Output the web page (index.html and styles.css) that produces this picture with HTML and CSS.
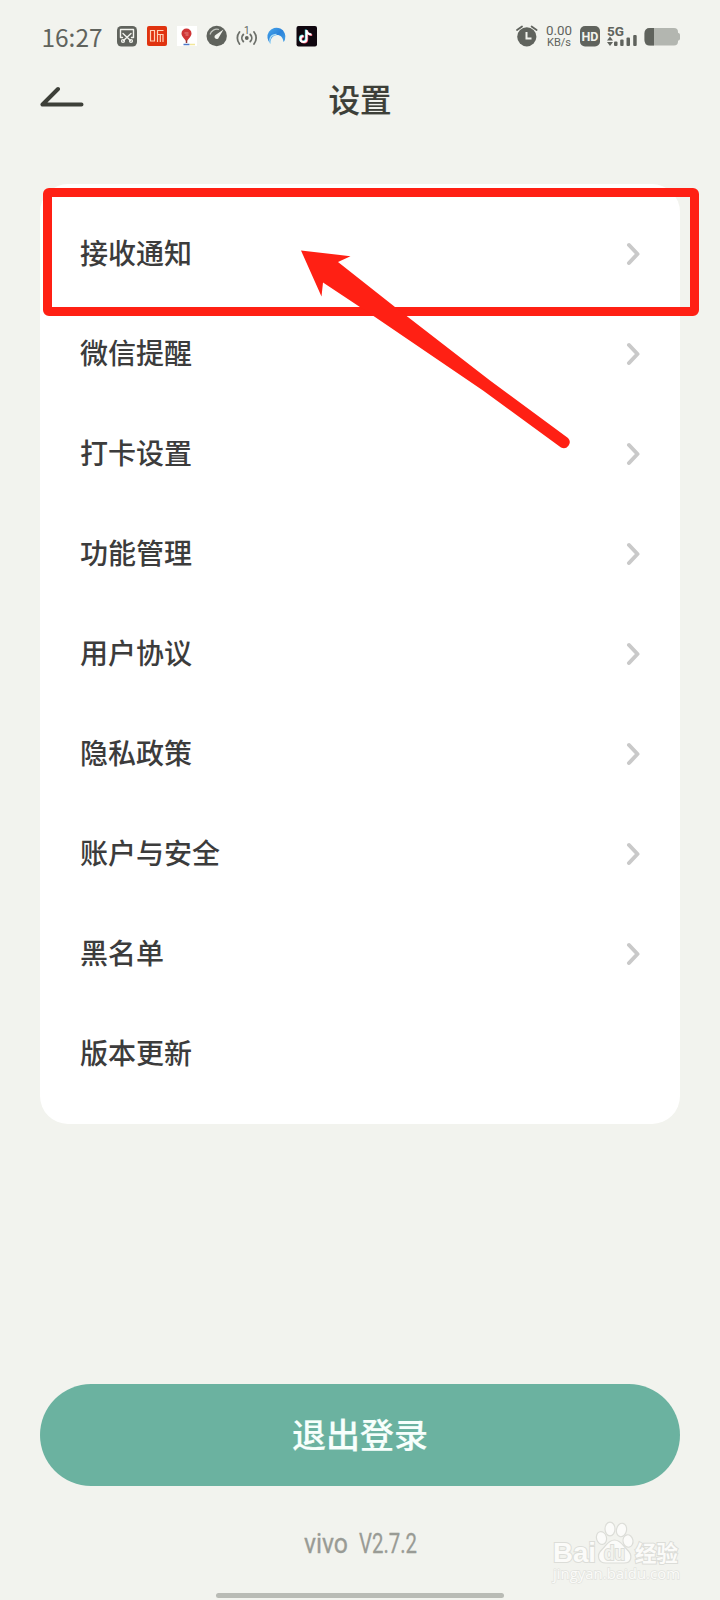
FILE: index.html
```html
<!DOCTYPE html>
<html lang="zh-CN">
<head>
<meta charset="utf-8">
<title>设置</title>
<link rel="stylesheet" href="styles.css">
</head>
<body>
<div class="screen">
  <header class="status">
    <svg class="status-art" viewBox="0 0 720 72" width="720" height="72">
      <text class="clock" x="41.5" y="46.5" textLength="61" lengthAdjust="spacingAndGlyphs">16:27</text>
      <g fill="none" stroke-linecap="round" stroke-linejoin="round">
        <rect x="117" y="26" width="20" height="20.500" rx="4.500" fill="#60635d"/>
        <path d="M122.500 37.500H120.500V29.500H133.500V37.500H131.500M123 33.500L131 41M131 33.500L123 41" stroke="#f2f3ee" stroke-width="1.400"/>
        <circle cx="123" cy="41" r="1.500" stroke="#f2f3ee" stroke-width="1.200"/>
        <circle cx="131" cy="41" r="1.500" stroke="#f2f3ee" stroke-width="1.200"/>
      </g>
      <rect x="147" y="26" width="20" height="20" rx="2" fill="#e0330f"/>
      <path d="M150.500 30.500H154.500V41H150.500ZM163.500 30.500H157.500V42M157.500 34.500H163V42M160.300 34.500V42" fill="none" stroke="#ffd3b8" stroke-width="1.200"/>
      <rect x="177" y="26" width="20" height="20" fill="#fff"/>
      <path d="M186.500 28.500a5 5 0 0 1 5 5c0 3-3 5-5 8c-2-3-5-5-5-8a5 5 0 0 1 5-5z" fill="#cf3435"/>
      <path d="M184.500 33h4M185.500 35h3" stroke="#efa09b" stroke-width=".8"/>
      <path d="M186.500 40v3" stroke="#983634" stroke-width="1.500"/>
      <path d="M183.500 44.500h6" stroke="#4d79c7" stroke-width="1.500"/><path d="M190 44.500h5" stroke="#f2e79a" stroke-width="1.500"/>
      <circle cx="216.700" cy="36" r="10.200" fill="#60635d"/>
      <path d="M210 34.500a7.200 7.200 0 0 1 9-5" fill="none" stroke="#c3c6c0" stroke-width="1.200"/>
      <path d="M223.500 29.500L218.800 37.500A2.200 2.200 0 1 1 215.500 35Z" fill="#f2f3ee"/>
      <g fill="none" stroke="#6c6f69" stroke-width="1.800" stroke-linecap="round">
        <path d="M239.500 32a9.500 9.500 0 0 0 0 12M243.300 34.500a5 5 0 0 0 0 7M254 32a9.500 9.500 0 0 1 0 12M250.300 34.500a5 5 0 0 1 0 7"/>
      </g>
      <circle cx="246.800" cy="38" r="1.900" fill="#60635d"/>
      <text class="tiny" x="244" y="34">1</text>
      <defs><linearGradient id="swirl" x1="0" x2="1" y1="0" y2="1"><stop offset="0" stop-color="#4ba9ec"/><stop offset=".5" stop-color="#2b83da"/><stop offset="1" stop-color="#4ba5e9"/></linearGradient></defs>
      <path d="M270.500 43.500A9 9 0 1 1 285 39.500Q284.500 41 283.500 42C283 37.500 280.500 35 277 35C273 35.500 270 38.500 270.500 43.500Z" fill="url(#swirl)"/>
      <path d="M270.500 43.500C268.500 38 271.500 34.500 276.500 34.500" fill="none" stroke="#a8dbf5" stroke-width="1.300"/>
      <rect x="296.500" y="26" width="20.500" height="20.500" rx="2" fill="#10070f"/>
      <g fill="none" stroke-width="2">
        <path d="M306.500 30V39a3 3 0 1 1-3-3M306.500 30.500q1 4 5 4" stroke="#4bd5dd" transform="translate(-.7 -.5)"/>
        <path d="M306.500 30V39a3 3 0 1 1-3-3M306.500 30.500q1 4 5 4" stroke="#f14868" transform="translate(.7 .6)"/>
        <path d="M306.500 30V39a3 3 0 1 1-3-3M306.500 30.500q1 4 5 4" stroke="#fff"/>
      </g>
      <circle cx="526.800" cy="36.800" r="9.600" fill="#60635d"/>
      <path d="M517 30l5-3.500M536.600 30l-5-3.500" stroke="#60635d" stroke-width="1.800" stroke-linecap="round"/>
      <path d="M526.500 32v6.500h5" fill="none" stroke="#f2f3ee" stroke-width="2"/>
      <text class="rate" x="546" y="35" textLength="26" lengthAdjust="spacingAndGlyphs">0.00</text>
      <text class="unit" x="547" y="46" textLength="24" lengthAdjust="spacingAndGlyphs">KB/s</text>
      <rect x="580" y="26" width="20" height="20.500" rx="5" fill="#60635d"/>
      <text class="hd" x="581.500" y="41" textLength="17" lengthAdjust="spacingAndGlyphs">HD</text>
      <text class="net" x="607" y="36" textLength="17" lengthAdjust="spacingAndGlyphs">5G</text>
      <path d="M607 40.500l3-4 3 4zM607 42l3 4 3-4z" fill="#60635d"/>
      <g fill="#60635d"><rect x="614" y="41.500" width="3.500" height="4.500" rx="1"/><rect x="620.200" y="39.500" width="3.400" height="6.500" rx="1"/><rect x="626.500" y="37.500" width="3.500" height="8.500" rx="1"/><rect x="633.200" y="35" width="3.500" height="11" rx="1"/></g>
      <path d="M650 28h24q4 0 4 4v.8q2 .5 2 2v4q0 1.500-2 2v.8q0 4-4 4h-24q-5.500 0-5.500-5.500v-6.600q0-5.500 5.500-5.500z" fill="#b3b6b0"/>
      <path d="M654 28v17.600h-4q-5.500 0-5.500-5.500v-6.600q0-5.500 5.500-5.500z" fill="#60635d"/>
    </svg>
  </header>
  <nav class="nav">
    <svg class="back" viewBox="0 0 44 22" width="44" height="22"><path d="M18 3L2.500 18.500H41.500" fill="none" stroke="#3d3f38" stroke-width="4" stroke-linecap="round" stroke-linejoin="round"/></svg>
    <h1 class="title">设置</h1>
  </nav>
  <main class="card">
    <div class="row"><span>接收通知</span><svg class="chev" viewBox="0 0 14 24"><path d="M3 3L11.500 12L3 21"/></svg></div>
    <div class="row"><span>微信提醒</span><svg class="chev" viewBox="0 0 14 24"><path d="M3 3L11.500 12L3 21"/></svg></div>
    <div class="row"><span>打卡设置</span><svg class="chev" viewBox="0 0 14 24"><path d="M3 3L11.500 12L3 21"/></svg></div>
    <div class="row"><span>功能管理</span><svg class="chev" viewBox="0 0 14 24"><path d="M3 3L11.500 12L3 21"/></svg></div>
    <div class="row"><span>用户协议</span><svg class="chev" viewBox="0 0 14 24"><path d="M3 3L11.500 12L3 21"/></svg></div>
    <div class="row"><span>隐私政策</span><svg class="chev" viewBox="0 0 14 24"><path d="M3 3L11.500 12L3 21"/></svg></div>
    <div class="row"><span>账户与安全</span><svg class="chev" viewBox="0 0 14 24"><path d="M3 3L11.500 12L3 21"/></svg></div>
    <div class="row"><span>黑名单</span><svg class="chev" viewBox="0 0 14 24"><path d="M3 3L11.500 12L3 21"/></svg></div>
    <div class="row"><span>版本更新</span></div>
  </main>
  <button class="logout">退出登录</button>
  <footer class="version">
    <svg viewBox="0 0 130 40" width="130" height="40"><text class="ver" x="9" y="28" textLength="44" lengthAdjust="spacingAndGlyphs">vivo</text><text class="ver" x="64" y="28" textLength="58" lengthAdjust="spacingAndGlyphs">V2.7.2</text></svg>
  </footer>
  <div class="home"></div>

  <div class="highlight"></div>
  <svg class="arrow" viewBox="295 245 280 210" width="280" height="210">
    <path d="M301 250.500L350.500 256.200L338 262L395 307L490 380.500L568 438A6 6 0 0 1 561 447.500L483 390.500L375 317L323 282.500L321.500 296.500Z" fill="#ff2014"/>
  </svg>
  <svg class="watermark" viewBox="545 1515 145 75" width="145" height="75">
    <g class="mark">
      <text class="bai" x="553" y="1562" textLength="43" lengthAdjust="spacingAndGlyphs">Bai</text>
      <ellipse cx="601.500" cy="1538" rx="5" ry="6.500" transform="rotate(-15 601.500 1538)"/>
      <ellipse cx="610" cy="1529" rx="5" ry="6.800"/>
      <ellipse cx="621.500" cy="1530" rx="5" ry="6.800" transform="rotate(12 621.500 1530)"/>
      <ellipse cx="628" cy="1541" rx="5" ry="6.300" transform="rotate(-10 628 1541)"/>
      <path d="M614.500 1540C608 1540 606 1546 602 1549.500C596 1555 598 1563 606 1563H624C632 1563 633 1555 627 1549.500C623 1546 621 1540 614.500 1540Z"/>
      <text class="du" x="604" y="1560" textLength="21" lengthAdjust="spacingAndGlyphs">du</text>
      <text class="jy" x="635" y="1561" textLength="43" lengthAdjust="spacingAndGlyphs">经验</text>
      <text class="url" x="553" y="1579" textLength="127" lengthAdjust="spacingAndGlyphs">jingyan.baidu.com</text>
    </g>
  </svg>
</div>
</body>
</html>
```
FILE: styles.css
```css
* { box-sizing: border-box; }
body {
  margin: 0;
  background: #f2f3ee;
  font-family: "Noto Sans CJK SC", sans-serif;
}
.screen {
  position: relative;
  width: 720px;
  height: 1600px;
  overflow: hidden;
  display: flex;
  flex-direction: column;
  background: #f2f3ee;
}
.status { height: 72px; flex: none; }
.status-art { display: block; }
.status-art text { fill: #60635d; font-family: Roboto, sans-serif; }
.status-art .clock { font-family: "Noto Sans CJK SC", sans-serif; font-size: 24.5px; }
.status-art .tiny { font-size: 10px; }
.status-art .rate { font-size: 13px; }
.status-art .unit { font-size: 10.5px; }
.status-art .hd { font-size: 13.5px; font-weight: 700; fill: #f2f3ee; }
.status-art .net { font-size: 13.5px; font-weight: 700; }
.nav {
  display: grid;
  grid-template-columns: 1fr auto 1fr;
  align-items: center;
  height: 56px;
  padding: 0 39.5px;
  flex: none;
}
.back { margin-top: -6px; }
.title {
  margin: 0;
  padding-bottom: 3px;
  font-size: 31.5px;
  line-height: 53px;
  font-weight: 500;
  color: #3d3f38;
  -webkit-text-stroke: .2px #3d3f38;
}
.card {
  flex: none;
  margin: 56px 40px 0;
  padding: 20px 40px;
  border-radius: 28px;
  background: #fff;
}
.row {
  display: flex;
  align-items: center;
  justify-content: space-between;
  height: 100px;
  font-size: 28px;
  line-height: 40px;
  font-weight: 500;
  color: #3c3c3c;
}
.row span { padding-bottom: 5px; }
.chev { width: 14px; height: 24px; margin-bottom: 1px; }
.chev path { fill: none; stroke: #c9c9c9; stroke-width: 4; stroke-linecap: round; stroke-linejoin: round; }
.logout {
  flex: none;
  height: 102px;
  margin: 260px 40px 0;
  padding: 0 0 3px;
  border: 0;
  border-radius: 51px;
  background: #6bb2a0;
  color: #f7fffc;
  font: 500 34px/50px "Noto Sans CJK SC", sans-serif;
  -webkit-text-stroke: .2px #f7fffc;
}
.version { display: flex; justify-content: center; margin-top: 39px; height: 40px; }
.ver { font-family: Roboto, sans-serif; font-size: 27.5px; fill: #999b95; stroke: #999b95; stroke-width: .3px; }
.home { width: 288px; height: 5px; margin: 28px auto 0; border-radius: 3px; background: #b9bbb5; }
.highlight {
  position: absolute;
  left: 43px;
  top: 188px;
  width: 656px;
  height: 128px;
  border: 9px solid #ff2014;
  border-radius: 6px;
}
.arrow { position: absolute; left: 295px; top: 245px; }
.watermark { position: absolute; left: 545px; top: 1515px; }
.mark { fill: #fbfbf9; stroke: #dcddd8; stroke-width: 1.2; }
.mark text { paint-order: stroke; stroke-width: 2; }
.bai { font: 700 28px "Liberation Sans", sans-serif; }
.mark .du { font: 700 20px "Liberation Sans", sans-serif; fill: #f2f3ee; }
.jy { font: 700 22px "Noto Sans CJK SC", sans-serif; }
.mark .url { font: 400 15px "Open Sans", sans-serif; stroke: #e2e3de; stroke-width: 1.4; }
```
